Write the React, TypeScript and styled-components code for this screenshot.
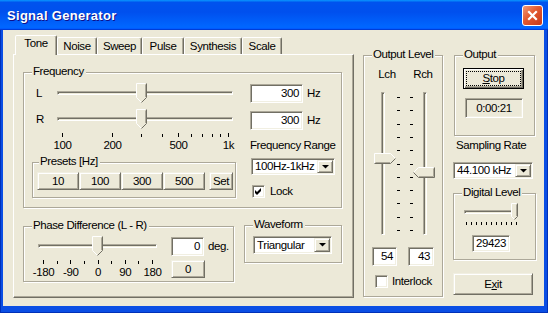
import React from 'react';
import styled, { createGlobalStyle, css } from 'styled-components';

const FACE = '#ece9d8';
const LIGHT = '#f1efe2';
const SHADOW = '#aca899';
const DARK = '#716f64';

const GlobalStyle = createGlobalStyle`
  * { box-sizing: border-box; }
  html, body { margin: 0; padding: 0; }
  body {
    font-family: 'Liberation Sans', Arial, sans-serif;
    font-size: 11.5px;
    letter-spacing: -0.4px;
    line-height: 13px;
    color: #000;
  }
`;

const raised = css`
  background: ${FACE};
  border: 1px solid;
  border-color: ${LIGHT} ${DARK} ${DARK} ${LIGHT};
  box-shadow: inset 1px 1px #fff, inset -1px -1px ${SHADOW};
`;

const sunken = css`
  border: 1px solid;
  border-color: ${SHADOW} #fff #fff ${SHADOW};
  box-shadow: inset 1px 1px ${DARK}, inset -1px -1px ${LIGHT};
`;

const groove = css`
  border: 1px solid;
  border-color: ${SHADOW} #fff #fff ${SHADOW};
  box-shadow: inset 1px 1px ${DARK};
`;

const groupFrame = css`
  position: relative;
  border: 1px solid ${SHADOW};
  box-shadow: inset 1px 1px #fff, 1px 1px #fff;
`;

/* window chrome */

const Window = styled.div`
  width: 548px;
  height: 313px;
  display: flex;
  flex-direction: column;
  background: #0a4ee4;
  box-shadow: inset 1px 0 #0030b8, inset -1px 0 #0030b8, inset 0 -1px #0030b8;
`;

const TitleBar = styled.div`
  flex: none;
  height: 30px;
  display: flex;
  align-items: center;
  justify-content: space-between;
  padding: 0 5px 0 7px;
  background: linear-gradient(
    180deg,
    #0997ff,
    #0053ee 8%,
    #0050ee 40%,
    #0066ff 88%,
    #0066ff 93%,
    #005bff 95%,
    #003dd7 96%,
    #003dd7
  );
`;

const Title = styled.span`
  font-family: 'Liberation Sans', Arial, sans-serif;
  font-weight: bold;
  font-size: 13px;
  letter-spacing: 0.3px;
  color: #fff;
  text-shadow: 1px 1px #0f1089;
`;

const CloseButton = styled.div`
  width: 21px;
  height: 21px;
  border: 1px solid #fff;
  border-radius: 3px;
  background: linear-gradient(135deg, #f29a78, #e2582f 45%, #c8391a);
  display: flex;
  align-items: center;
  justify-content: center;
`;

const Client = styled.div`
  flex: 1;
  margin: 0 4px 7px 3px;
  padding: 5px 0 0 10px;
  background: ${FACE};
  display: flex;
  align-items: flex-start;
`;

/* tabs */

const TabControl = styled.div`
  width: 341px;
  display: flex;
  flex-direction: column;
`;

const TabStrip = styled.div`
  height: 19px;
  display: flex;
  align-items: flex-end;
  padding-left: 2px;
`;

const Tab = styled.div<{ $w: number; $active?: boolean }>`
  position: relative;
  z-index: ${p => (p.$active ? 1 : 0)};
  width: ${p => p.$w}px;
  height: ${p => (p.$active ? 20 : 17)}px;
  margin-bottom: ${p => (p.$active ? -1 : 0)}px;
  padding-bottom: ${p => (p.$active ? 4 : 0)}px;
  background: ${FACE};
  border: 1px solid;
  border-bottom: none;
  border-color: #fff ${DARK} transparent #fff;
  border-radius: 2px 2px 0 0;
  box-shadow: inset -1px 0 ${SHADOW};
  display: flex;
  align-items: center;
  justify-content: center;
`;

const TabPanel = styled.div`
  height: 244px;
  border: 1px solid;
  border-color: #fff ${DARK} ${DARK} #fff;
  box-shadow: inset -1px -1px ${SHADOW};
  padding: 17px 11px 0 9px;
  display: flex;
  flex-direction: column;
`;

const GroupLabel = styled.span<{ $left?: number }>`
  position: absolute;
  top: -8px;
  left: ${p => p.$left ?? 8}px;
  padding: 0 2px 0 1px;
  background: ${FACE};
  white-space: nowrap;
`;

/* common controls */

const Button = styled.div<{ $w: number; $h: number }>`
  ${raised}
  flex: none;
  width: ${p => p.$w}px;
  height: ${p => p.$h}px;
  display: flex;
  align-items: center;
  justify-content: center;
`;

const DefaultButton = styled(Button)`
  border: 1px solid #000;
  box-shadow: inset 1px 1px #fff, inset -1px -1px ${DARK}, inset -2px -2px ${SHADOW};
  outline: 1px dotted #000;
  outline-offset: -4px;
`;

const Field = styled.div<{ $w: number; $h: number; $center?: boolean; $readOnly?: boolean }>`
  ${sunken}
  flex: none;
  width: ${p => p.$w}px;
  height: ${p => p.$h}px;
  padding: 0 3px;
  background: ${p => (p.$readOnly ? FACE : '#fff')};
  display: flex;
  align-items: center;
  justify-content: ${p => (p.$center ? 'center' : 'flex-end')};
`;

const Combo = styled.div<{ $w: number; $h: number }>`
  ${sunken}
  flex: none;
  width: ${p => p.$w}px;
  height: ${p => p.$h}px;
  padding: 1px;
  background: #fff;
  display: flex;
`;

const ComboText = styled.span`
  flex: 1;
  padding-left: 2px;
  display: flex;
  align-items: center;
  white-space: nowrap;
`;

const ComboArrow = styled.div`
  ${raised}
  width: 16px;
  display: flex;
  align-items: center;
  justify-content: center;
`;

const CheckRow = styled.div`
  display: flex;
  align-items: center;
  gap: 5px;
`;

const CheckBox = styled.div`
  ${sunken}
  width: 13px;
  height: 13px;
  background: #fff;
`;

const Unit = styled.span`
  white-space: nowrap;
`;

/* sliders */

const SliderBox = styled.div<{ $w: number; $h: number }>`
  position: relative;
  flex: none;
  width: ${p => p.$w}px;
  height: ${p => p.$h}px;
`;

const HTrack = styled.div<{ $top: number }>`
  ${groove}
  height: 4px;
  margin: ${p => p.$top}px 1px 0;
`;

const VTrack = styled.div<{ $x: number }>`
  ${groove}
  position: absolute;
  top: 5px;
  bottom: 5px;
  left: ${p => p.$x - 2}px;
  width: 4px;
`;

const ThumbSvg = styled.svg`
  position: absolute;
  display: block;
`;

const TickSvg = styled.svg`
  display: block;
`;

const SideTicks = styled.svg`
  position: absolute;
  top: 0;
`;

type Dir = 'down' | 'right' | 'left';

function Thumb({ dir, w, h, left, top }: { dir: Dir; w: number; h: number; left: number; top: number }) {
  const L = 0.5;
  const T = 0.5;
  const R = w - 0.5;
  const B = h - 0.5;
  let poly = '';
  let hi = '';
  let lo = '';
  let inner = '';
  if (dir === 'down') {
    const t = Math.floor(w / 2);
    const yb = B - t;
    const cx = w / 2;
    poly = `${L},${T} ${R},${T} ${R},${yb} ${cx},${B} ${L},${yb}`;
    hi = `M${L} ${yb} V${T} H${R - 1} M${L} ${yb} L${cx} ${B}`;
    lo = `M${R} ${T} V${yb} L${cx} ${B}`;
    inner = `M${R - 1} ${T + 1} V${yb - 0.5}`;
  } else if (dir === 'right') {
    const t = Math.floor(h / 2);
    const xb = R - t;
    const cy = h / 2;
    poly = `${L},${T} ${xb},${T} ${R},${cy} ${xb},${B} ${L},${B}`;
    hi = `M${L} ${B} V${T} H${xb} L${R} ${cy}`;
    lo = `M${L} ${B} H${xb} L${R} ${cy}`;
    inner = `M${L + 1} ${B - 1} H${xb - 0.5}`;
  } else {
    const t = Math.floor(h / 2);
    const xb = L + t;
    const cy = h / 2;
    poly = `${xb},${T} ${R},${T} ${R},${B} ${xb},${B} ${L},${cy}`;
    hi = `M${L} ${cy} L${xb} ${T} H${R - 1}`;
    lo = `M${R} ${T} V${B} H${xb} L${L} ${cy}`;
    inner = `M${R - 1} ${T + 1} V${B - 1} H${xb + 0.5}`;
  }
  return (
    <ThumbSvg width={w} height={h} style={{ left, top }}>
      <polygon points={poly} fill={FACE} />
      <path d={inner} stroke={SHADOW} fill="none" />
      <path d={hi} stroke="#fff" fill="none" />
      <path d={lo} stroke={DARK} fill="none" />
    </ThumbSvg>
  );
}

function HSlider({
  width,
  frac,
  height = 20,
  trackTop = 8,
  pad = 6,
  thumbW = 11,
}: {
  width: number;
  frac: number;
  height?: number;
  trackTop?: number;
  pad?: number;
  thumbW?: number;
}) {
  const cx = pad + frac * (width - pad * 2);
  return (
    <SliderBox $w={width} $h={height}>
      <HTrack $top={trackTop} />
      <Thumb dir="down" w={thumbW} h={height} left={Math.round(cx - thumbW / 2)} top={0} />
    </SliderBox>
  );
}

function VSlider({
  width,
  trackX,
  ticksX,
  frac,
  dir,
}: {
  width: number;
  trackX: number;
  ticksX: number;
  frac: number;
  dir: 'right' | 'left';
}) {
  const height = 153;
  const pad = 10;
  const span = height - pad * 2;
  const cy = pad + (1 - frac) * span;
  const ticks = Array.from({ length: 11 }, (_, i) => Math.round(pad + (i / 10) * span) + 0.5);
  return (
    <SliderBox $w={width} $h={height}>
      <VTrack $x={trackX} />
      <SideTicks width={3} height={height} style={{ left: ticksX }}>
        {ticks.map(y => (
          <line key={y} x1={0} x2={3} y1={y} y2={y} stroke="#000" />
        ))}
      </SideTicks>
      <Thumb
        dir={dir}
        w={22}
        h={11}
        left={dir === 'right' ? trackX - 9 : trackX - 12}
        top={Math.round(cy - 5.5)}
      />
    </SliderBox>
  );
}

type Mark = { at: number; label?: string };

const ScaleBox = styled.div<{ $w: number }>`
  position: relative;
  flex: none;
  width: ${p => p.$w}px;
  height: 23px;
  padding-top: 4px;
`;

const ScaleLabel = styled.span`
  position: absolute;
  top: 10px;
  transform: translateX(-50%);
  white-space: nowrap;
`;

function Scale({ width, pad, marks }: { width: number; pad: number; marks: Mark[] }) {
  const span = width - pad * 2;
  const x = (m: Mark) => pad + m.at * span;
  return (
    <ScaleBox $w={width}>
      <TickSvg width={width} height={4}>
        {marks.map((m, i) => {
          const px = Math.round(x(m)) + 0.5;
          return <line key={i} x1={px} x2={px} y1={m.label ? 0 : 1} y2={4} stroke="#000" />;
        })}
      </TickSvg>
      {marks
        .filter(m => m.label)
        .map(m => (
          <ScaleLabel key={m.label} style={{ left: x(m) + 0.5 }}>
            {m.label}
          </ScaleLabel>
        ))}
    </ScaleBox>
  );
}

/* tone panel */

const FrequencyGroup = styled.div`
  ${groupFrame}
  width: 319px;
  height: 136px;
  padding: 10px 0 0 8px;
  display: flex;
`;

const FreqLeft = styled.div`
  width: 204px;
  display: flex;
  flex-direction: column;
`;

const SliderRow = styled.div<{ $gap?: number }>`
  display: flex;
  height: 20px;
  margin-top: ${p => p.$gap ?? 0}px;
`;

const ChannelLabel = styled.span`
  width: 24px;
  padding-left: 4px;
  line-height: 20px;
`;

const ScaleIndent = styled.div`
  padding-left: 24px;
`;

const PresetsGroup = styled.div`
  ${groupFrame}
  width: 204px;
  height: 36px;
  margin-top: 10px;
  padding: 9px 0 0 4px;
  display: flex;
  gap: 0;
`;

const SetButton = styled(Button)`
  margin-left: 4px;
`;

const FreqRight = styled.div`
  margin: 1px 0 0 14px;
  display: flex;
  flex-direction: column;
  align-items: flex-start;
`;

const FieldRow = styled.div<{ $gap?: number }>`
  display: flex;
  align-items: center;
  gap: 4px;
  margin-top: ${p => p.$gap ?? 0}px;
`;

const RangeLabel = styled.span`
  margin-top: 9px;
  white-space: nowrap;
`;

const RangeCombo = styled(Combo)`
  margin: 6px 0 0 1px;
`;

const LockRow = styled(CheckRow)`
  margin: 10px 0 0 2px;
`;

const BottomRow = styled.div`
  display: flex;
  align-items: flex-start;
  margin-top: 18px;
`;

const PhaseGroup = styled.div`
  ${groupFrame}
  width: 211px;
  height: 56px;
  padding: 9px 0 0 13px;
  display: flex;
`;

const PhaseSlider = styled.div`
  display: flex;
  flex-direction: column;
`;

const PhaseSide = styled.div`
  margin: 1px 0 0 13px;
  display: flex;
  flex-direction: column;
`;

const ResetButton = styled(Button)`
  margin-top: 4px;
`;

const WaveformGroup = styled.div`
  ${groupFrame}
  width: 98px;
  height: 38px;
  margin: -1px 0 0 10px;
  padding: 10px 0 0 8px;
`;

/* output level */

const OutputLevelGroup = styled.div`
  ${groupFrame}
  flex: none;
  width: 80px;
  height: 242px;
  margin: 20px 0 0 9px;
  padding: 12px 0 0 8px;
  display: flex;
  flex-direction: column;
`;

const ChannelHeads = styled.div`
  display: flex;
  gap: 6px;
`;

const ChannelHead = styled.span`
  width: 30px;
  text-align: center;
`;

const SliderPair = styled.div`
  display: flex;
  gap: 6px;
  margin-top: 6px;
`;

const LevelFields = styled.div`
  display: flex;
  gap: 11px;
  margin-top: 7px;
`;

const InterlockRow = styled(CheckRow)`
  margin: 9px 0 0 3px;
  gap: 4px;
`;

/* side column */

const SideColumn = styled.div`
  flex: none;
  width: 83px;
  margin: 20px 0 0 10px;
  display: flex;
  flex-direction: column;
  align-items: flex-start;
`;

const OutputGroup = styled.div`
  ${groupFrame}
  width: 81px;
  height: 81px;
  margin-left: 1px;
  padding: 12px 0 0 8px;
  display: flex;
  flex-direction: column;
  align-items: flex-start;
`;

const TimeField = styled(Field)`
  margin: 9px 0 0 2px;
`;

const SamplingLabel = styled.span`
  margin: 3px 0 0 3px;
  white-space: nowrap;
`;

const SamplingCombo = styled(Combo)`
  margin-top: 10px;
`;

const DigitalGroup = styled.div`
  ${groupFrame}
  width: 83px;
  height: 67px;
  margin-top: 14px;
  padding: 9px 0 0 9px;
  display: flex;
  flex-direction: column;
  align-items: flex-start;
`;

const DigitalTicks = styled(TickSvg)`
  margin-top: 2px;
`;

const DigitalField = styled(Field)`
  margin: 10px 0 0 9px;
`;

const ExitButton = styled(Button)`
  margin-top: 13px;
`;

/* drawings */

const CloseIcon = () => (
  <svg width={13} height={13}>
    <path d="M3 3 L10 10 M10 3 L3 10" stroke="#fff" strokeWidth={2.2} strokeLinecap="square" />
  </svg>
);

const ArrowIcon = () => (
  <svg width={7} height={4}>
    <polygon points="0,0 7,0 3.5,3.5" fill="#000" />
  </svg>
);

const CheckIcon = () => (
  <svg width={11} height={11} style={{ display: 'block' }}>
    <polygon points="2,4 4,6 8,2 8,5 4,9 2,7" fill="#000" />
  </svg>
);

const TABS = [
  { name: 'Tone', w: 42 },
  { name: 'Noise', w: 40 },
  { name: 'Sweep', w: 45 },
  { name: 'Pulse', w: 42 },
  { name: 'Synthesis', w: 58 },
  { name: 'Scale', w: 40 },
];

const FREQ_LABELS: Record<number, string> = { 100: '100', 200: '200', 500: '500', 1000: '1k' };
const FREQ_MARKS: Mark[] = [100, 200, 300, 400, 500, 600, 700, 800, 900, 1000].map(f => ({
  at: Math.log10(f / 100),
  label: FREQ_LABELS[f],
}));

const PHASE_MARKS: Mark[] = [-180, -135, -90, -45, 0, 45, 90, 135, 180].map(v => ({
  at: (v + 180) / 360,
  label: v % 90 === 0 ? String(v) : undefined,
}));

const PRESETS = ['10', '100', '300', '500'];

const freqFrac = Math.log10(300 / 100);
const levelFrac = 0.96;

export default function App() {
  const digitalTicks = Array.from({ length: 11 }, (_, i) => Math.round(3 + (i / 10) * 50) + 0.5);

  return (
    <>
      <GlobalStyle />
      <Window>
        <TitleBar>
          <Title>Signal Generator</Title>
          <CloseButton>
            <CloseIcon />
          </CloseButton>
        </TitleBar>
        <Client>
          <TabControl>
            <TabStrip>
              {TABS.map((t, i) => (
                <Tab key={t.name} $w={t.w} $active={i === 0}>
                  {t.name}
                </Tab>
              ))}
            </TabStrip>
            <TabPanel>
              <FrequencyGroup>
                <GroupLabel>Frequency</GroupLabel>
                <FreqLeft>
                  <SliderRow>
                    <ChannelLabel>L</ChannelLabel>
                    <HSlider width={178} frac={freqFrac} />
                  </SliderRow>
                  <SliderRow $gap={6}>
                    <ChannelLabel>R</ChannelLabel>
                    <HSlider width={178} frac={freqFrac} />
                  </SliderRow>
                  <ScaleIndent>
                    <Scale width={178} pad={6} marks={FREQ_MARKS} />
                  </ScaleIndent>
                  <PresetsGroup>
                    <GroupLabel $left={6}>Presets [Hz]</GroupLabel>
                    {PRESETS.map(p => (
                      <Button key={p} $w={42} $h={18}>
                        {p}
                      </Button>
                    ))}
                    <SetButton $w={24} $h={18}>
                      Set
                    </SetButton>
                  </PresetsGroup>
                </FreqLeft>
                <FreqRight>
                  <FieldRow>
                    <Field $w={53} $h={19}>300</Field>
                    <Unit>Hz</Unit>
                  </FieldRow>
                  <FieldRow $gap={8}>
                    <Field $w={53} $h={19}>300</Field>
                    <Unit>Hz</Unit>
                  </FieldRow>
                  <RangeLabel>Frequency Range</RangeLabel>
                  <RangeCombo $w={84} $h={17}>
                    <ComboText>100Hz-1kHz</ComboText>
                    <ComboArrow>
                      <ArrowIcon />
                    </ComboArrow>
                  </RangeCombo>
                  <LockRow>
                    <CheckBox>
                      <CheckIcon />
                    </CheckBox>
                    <span>Lock</span>
                  </LockRow>
                </FreqRight>
              </FrequencyGroup>

              <BottomRow>
                <PhaseGroup>
                  <GroupLabel>Phase Difference (L - R)</GroupLabel>
                  <PhaseSlider>
                    <HSlider width={121} frac={0.5} />
                    <Scale width={121} pad={6} marks={PHASE_MARKS} />
                  </PhaseSlider>
                  <PhaseSide>
                    <FieldRow>
                      <Field $w={33} $h={19}>0</Field>
                      <Unit>deg.</Unit>
                    </FieldRow>
                    <ResetButton $w={34} $h={18}>
                      0
                    </ResetButton>
                  </PhaseSide>
                </PhaseGroup>
                <WaveformGroup>
                  <GroupLabel>Waveform</GroupLabel>
                  <Combo $w={79} $h={18}>
                    <ComboText>Triangular</ComboText>
                    <ComboArrow>
                      <ArrowIcon />
                    </ComboArrow>
                  </Combo>
                </WaveformGroup>
              </BottomRow>
            </TabPanel>
          </TabControl>

          <OutputLevelGroup>
            <GroupLabel>Output Level</GroupLabel>
            <ChannelHeads>
              <ChannelHead>Lch</ChannelHead>
              <ChannelHead>Rch</ChannelHead>
            </ChannelHeads>
            <SliderPair>
              <VSlider width={30} trackX={11} ticksX={25} frac={0.54} dir="right" />
              <VSlider width={30} trackX={17} ticksX={2} frac={0.43} dir="left" />
            </SliderPair>
            <LevelFields>
              <Field $w={25} $h={19}>54</Field>
              <Field $w={26} $h={19}>43</Field>
            </LevelFields>
            <InterlockRow>
              <CheckBox />
              <span>Interlock</span>
            </InterlockRow>
          </OutputLevelGroup>

          <SideColumn>
            <OutputGroup>
              <GroupLabel>Output</GroupLabel>
              <DefaultButton $w={61} $h={21}>
                <span>
                  <u>S</u>top
                </span>
              </DefaultButton>
              <TimeField $w={58} $h={20} $center $readOnly>
                0:00:21
              </TimeField>
            </OutputGroup>
            <SamplingLabel>Sampling Rate</SamplingLabel>
            <SamplingCombo $w={80} $h={17}>
              <ComboText>44.100 kHz</ComboText>
              <ComboArrow>
                <ArrowIcon />
              </ComboArrow>
            </SamplingCombo>
            <DigitalGroup>
              <GroupLabel>Digital Level</GroupLabel>
              <HSlider width={56} height={17} trackTop={7} pad={3} thumbW={7} frac={levelFrac} />
              <DigitalTicks width={56} height={3}>
                {digitalTicks.map(x => (
                  <line key={x} x1={x} x2={x} y1={0} y2={3} stroke="#000" />
                ))}
              </DigitalTicks>
              <DigitalField $w={38} $h={17} $center>
                29423
              </DigitalField>
            </DigitalGroup>
            <ExitButton $w={80} $h={22}>
              <span>
                E<u>x</u>it
              </span>
            </ExitButton>
          </SideColumn>
        </Client>
      </Window>
    </>
  );
}
